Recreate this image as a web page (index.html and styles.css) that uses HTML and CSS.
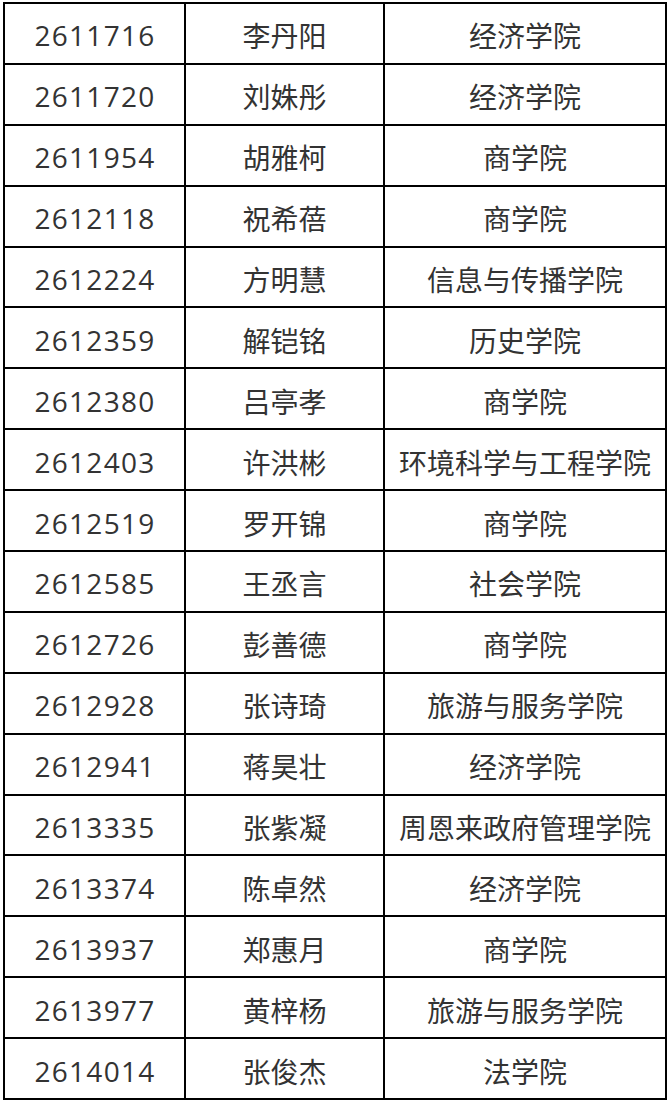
FILE: index.html
```html
<!DOCTYPE html>
<html lang="zh">
<head>
<meta charset="utf-8">
<link rel="stylesheet" href="styles.css">
</head>
<body>
<table class="list">
<colgroup><col class="c1"><col class="c2"><col class="c3"></colgroup>
<tbody>
<tr><td class="num">2611716</td><td>李丹阳</td><td>经济学院</td></tr>
<tr><td class="num">2611720</td><td>刘姝彤</td><td>经济学院</td></tr>
<tr><td class="num">2611954</td><td>胡雅柯</td><td>商学院</td></tr>
<tr><td class="num">2612118</td><td>祝希蓓</td><td>商学院</td></tr>
<tr><td class="num">2612224</td><td>方明慧</td><td>信息与传播学院</td></tr>
<tr><td class="num">2612359</td><td>解铠铭</td><td>历史学院</td></tr>
<tr><td class="num">2612380</td><td>吕亭孝</td><td>商学院</td></tr>
<tr><td class="num">2612403</td><td>许洪彬</td><td>环境科学与工程学院</td></tr>
<tr><td class="num">2612519</td><td>罗开锦</td><td>商学院</td></tr>
<tr><td class="num">2612585</td><td>王丞言</td><td>社会学院</td></tr>
<tr><td class="num">2612726</td><td>彭善德</td><td>商学院</td></tr>
<tr><td class="num">2612928</td><td>张诗琦</td><td>旅游与服务学院</td></tr>
<tr><td class="num">2612941</td><td>蒋昊壮</td><td>经济学院</td></tr>
<tr><td class="num">2613335</td><td>张紫凝</td><td>周恩来政府管理学院</td></tr>
<tr><td class="num">2613374</td><td>陈卓然</td><td>经济学院</td></tr>
<tr><td class="num">2613937</td><td>郑惠月</td><td>商学院</td></tr>
<tr><td class="num">2613977</td><td>黄梓杨</td><td>旅游与服务学院</td></tr>
<tr><td class="num">2614014</td><td>张俊杰</td><td>法学院</td></tr>
</tbody>
</table>
</body>
</html>
```

FILE: styles.css
```css
html, body {
  margin: 0;
  padding: 0;
  background: #ffffff;
}

body {
  padding: 2px 0 0 3px;
}

.list {
  border-collapse: collapse;
  table-layout: fixed;
  width: 664px;
  font-family: "Noto Sans CJK SC", "Noto Sans", sans-serif;
  font-size: 28px;
  color: #333333;
}

.c1 { width: 181px; }
.c2 { width: 199px; }
.c3 { width: 282px; }

.list td {
  border: 2px solid #000000;
  height: 60.9px;
  padding: 4px 0 0 0;
  box-sizing: border-box;
  text-align: center;
  vertical-align: middle;
  line-height: 1;
  white-space: nowrap;
}

.list td.num {
  font-family: "Open Sans", "Noto Sans", sans-serif;
  letter-spacing: 1.3px;
  padding-left: 1px;
}
```
